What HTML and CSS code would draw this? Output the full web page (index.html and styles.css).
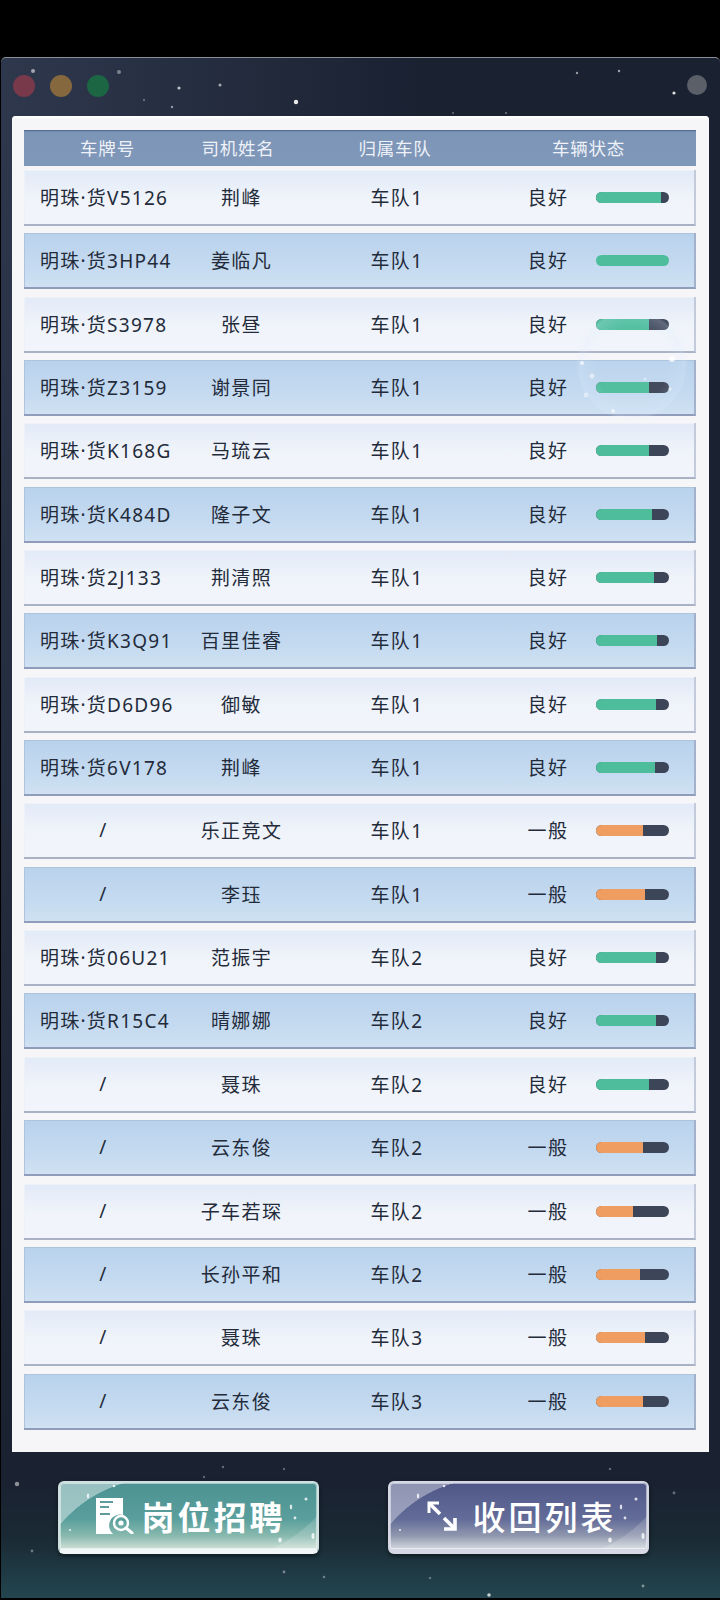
FILE: index.html
```html
<!DOCTYPE html>
<html lang="zh">
<head>
<meta charset="utf-8">
<title>车辆列表</title>
<link rel="stylesheet" href="styles.css">
</head>
<body>
<div class="window">
  <svg class="stars" width="719" height="1541" viewBox="0 0 719 1541">
    <g fill="#fff">
      <circle cx="32" cy="13" r="2" opacity=".55"/><circle cx="118" cy="14" r="2" opacity=".4"/><circle cx="178" cy="30" r="1.6" opacity=".7"/><circle cx="219" cy="27" r="1.5" opacity=".6"/><circle cx="295" cy="44" r="2.2" opacity=".9"/><circle cx="171" cy="49" r="1.2" opacity=".5"/><circle cx="143" cy="42" r="1" opacity=".4"/><circle cx="576" cy="15" r="1.2" opacity=".55"/><circle cx="618" cy="13" r="1.2" opacity=".6"/><circle cx="673" cy="35" r="1.6" opacity=".85"/><circle cx="452" cy="55" r="1" opacity=".35"/><circle cx="505" cy="55" r="1" opacity=".4"/>
      <circle cx="16" cy="1426" r="2.2" opacity=".5"/><circle cx="31" cy="1493" r="1.4" opacity=".35"/><circle cx="222" cy="1409" r="1.2" opacity=".35"/><circle cx="203" cy="1419" r="1.2" opacity=".3"/><circle cx="283" cy="1411" r="1.2" opacity=".3"/><circle cx="283" cy="1514" r="1.4" opacity=".4"/><circle cx="323" cy="1519" r="1.3" opacity=".35"/><circle cx="427" cy="1439" r="1.5" opacity=".4"/><circle cx="429" cy="1520" r="1.3" opacity=".3"/><circle cx="488" cy="1537" r="1.8" opacity=".75"/><circle cx="609" cy="1411" r="1.3" opacity=".3"/><circle cx="642" cy="1528" r="1.4" opacity=".45"/><circle cx="673" cy="1435" r="1.4" opacity=".35"/>
    </g>
  </svg>

  <header class="titlebar">
    <div class="lights">
      <span class="light light-red"></span>
      <span class="light light-amber"></span>
      <span class="light light-green"></span>
    </div>
    <span class="light light-grey"></span>
  </header>

  <main class="panel">
    <div class="thead">
      <span>车牌号</span><span>司机姓名</span><span>归属车队</span><span>车辆状态</span>
    </div>
    <div class="rows">
      <div class="row"><span class="plate">明珠·货V5126</span><span class="name">荆峰</span><span class="team">车队1</span><span class="status">良好</span><span class="bar"><i class="fill good" style="width:89%"></i></span></div>
      <div class="row alt"><span class="plate">明珠·货3HP44</span><span class="name">姜临凡</span><span class="team">车队1</span><span class="status">良好</span><span class="bar"><i class="fill good" style="width:100%"></i></span></div>
      <div class="row"><span class="plate">明珠·货S3978</span><span class="name">张昼</span><span class="team">车队1</span><span class="status">良好</span><span class="bar"><i class="fill good" style="width:73%"></i></span></div>
      <div class="row alt"><span class="plate">明珠·货Z3159</span><span class="name">谢景同</span><span class="team">车队1</span><span class="status">良好</span><span class="bar"><i class="fill good" style="width:72%"></i></span></div>
      <div class="row"><span class="plate">明珠·货K168G</span><span class="name">马琉云</span><span class="team">车队1</span><span class="status">良好</span><span class="bar"><i class="fill good" style="width:72%"></i></span></div>
      <div class="row alt"><span class="plate">明珠·货K484D</span><span class="name">隆子文</span><span class="team">车队1</span><span class="status">良好</span><span class="bar"><i class="fill good" style="width:77%"></i></span></div>
      <div class="row"><span class="plate">明珠·货2J133</span><span class="name">荆清照</span><span class="team">车队1</span><span class="status">良好</span><span class="bar"><i class="fill good" style="width:80%"></i></span></div>
      <div class="row alt"><span class="plate">明珠·货K3Q91</span><span class="name">百里佳睿</span><span class="team">车队1</span><span class="status">良好</span><span class="bar"><i class="fill good" style="width:83%"></i></span></div>
      <div class="row"><span class="plate">明珠·货D6D96</span><span class="name">御敏</span><span class="team">车队1</span><span class="status">良好</span><span class="bar"><i class="fill good" style="width:82%"></i></span></div>
      <div class="row alt"><span class="plate">明珠·货6V178</span><span class="name">荆峰</span><span class="team">车队1</span><span class="status">良好</span><span class="bar"><i class="fill good" style="width:81%"></i></span></div>
      <div class="row"><span class="plate slash">/</span><span class="name">乐正竞文</span><span class="team">车队1</span><span class="status">一般</span><span class="bar"><i class="fill fair" style="width:64%"></i></span></div>
      <div class="row alt"><span class="plate slash">/</span><span class="name">李珏</span><span class="team">车队1</span><span class="status">一般</span><span class="bar"><i class="fill fair" style="width:67%"></i></span></div>
      <div class="row"><span class="plate">明珠·货06U21</span><span class="name">范振宇</span><span class="team">车队2</span><span class="status">良好</span><span class="bar"><i class="fill good" style="width:82%"></i></span></div>
      <div class="row alt"><span class="plate">明珠·货R15C4</span><span class="name">晴娜娜</span><span class="team">车队2</span><span class="status">良好</span><span class="bar"><i class="fill good" style="width:82%"></i></span></div>
      <div class="row"><span class="plate slash">/</span><span class="name">聂珠</span><span class="team">车队2</span><span class="status">良好</span><span class="bar"><i class="fill good" style="width:73%"></i></span></div>
      <div class="row alt"><span class="plate slash">/</span><span class="name">云东俊</span><span class="team">车队2</span><span class="status">一般</span><span class="bar"><i class="fill fair" style="width:64%"></i></span></div>
      <div class="row"><span class="plate slash">/</span><span class="name">子车若琛</span><span class="team">车队2</span><span class="status">一般</span><span class="bar"><i class="fill fair" style="width:51%"></i></span></div>
      <div class="row alt"><span class="plate slash">/</span><span class="name">长孙平和</span><span class="team">车队2</span><span class="status">一般</span><span class="bar"><i class="fill fair" style="width:60%"></i></span></div>
      <div class="row"><span class="plate slash">/</span><span class="name">聂珠</span><span class="team">车队3</span><span class="status">一般</span><span class="bar"><i class="fill fair" style="width:67%"></i></span></div>
      <div class="row alt"><span class="plate slash">/</span><span class="name">云东俊</span><span class="team">车队3</span><span class="status">一般</span><span class="bar"><i class="fill fair" style="width:65%"></i></span></div>
    </div>
    <div class="bubble">
      <svg class="bubble-dots" width="104" height="104" viewBox="0 0 104 104">
        <g fill="#fff">
          <circle cx="2" cy="50" r="2" opacity=".7"/><circle cx="12" cy="63" r="2.4" opacity=".5"/><circle cx="6" cy="82" r="2.400" opacity=".45"/><circle cx="92" cy="46" r="3" opacity=".75"/><circle cx="65" cy="66" r="1.3" opacity=".5"/><circle cx="90" cy="76" r="1.600" opacity=".55"/><circle cx="33" cy="98" r="2" opacity=".6"/>
        </g>
      </svg>
    </div>
  </main>

  <footer class="footer">
    <button class="btn btn-teal" type="button">
      <svg class="btn-sparkles" width="257" height="65" viewBox="0 0 257 65">
        <g fill="#fff" opacity=".8">
          <ellipse cx="28" cy="13" rx="1.200" ry="2.400"/><circle cx="54" cy="3" r="1.300"/><ellipse cx="231" cy="24" rx="1.200" ry="2.400"/><circle cx="246" cy="16" r="1.500"/><circle cx="235" cy="35" r="1.400"/><ellipse cx="220" cy="57" rx="1.800" ry="2.600"/><ellipse cx="253" cy="53" rx="1.500" ry="3"/><circle cx="10" cy="47" r="1.100"/>
        </g>
      </svg>
      <svg class="btn-icon" width="38" height="36" viewBox="0 0 38 36">
        <path fill="#fff" d="M0 0h27v17a11 11 0 0 0-10 19H0z"/>
        <g stroke="#5f9c9e" stroke-width="2" fill="none"><path d="M4 4h13M4 9h9M4 16h10"/></g>
        <circle cx="25" cy="25" r="7" fill="none" stroke="#fff" stroke-width="2.400"/>
        <circle cx="25" cy="25" r="2.600" fill="#fff"/>
        <path d="M30 30l6 5" stroke="#fff" stroke-width="3" stroke-linecap="round"/>
      </svg>
      <span class="btn-label">岗位招聘</span>
    </button>
    <button class="btn btn-violet" type="button">
      <svg class="btn-sparkles" width="257" height="65" viewBox="0 0 257 65">
        <g fill="#fff" opacity=".8">
          <ellipse cx="28" cy="13" rx="1.200" ry="2.400"/><circle cx="54" cy="3" r="1.300"/><ellipse cx="231" cy="24" rx="1.200" ry="2.400"/><circle cx="246" cy="16" r="1.500"/><circle cx="235" cy="35" r="1.400"/><ellipse cx="220" cy="57" rx="1.800" ry="2.600"/><ellipse cx="253" cy="53" rx="1.500" ry="3"/><circle cx="10" cy="47" r="1.100"/>
        </g>
      </svg>
      <svg class="btn-icon" width="30" height="30" viewBox="0 0 30 30">
        <g fill="none" stroke="#fff" stroke-width="3.600">
          <path d="M2 12V2h10" stroke-width="3"/>
          <path d="M3 3l10 10"/>
          <path d="M17 17l10 10"/>
          <path d="M28 17v11H17"/>
        </g>
      </svg>
      <span class="btn-label">收回列表</span>
    </button>
  </footer>
</div>
</body>
</html>
```

FILE: styles.css
```css
* { box-sizing: border-box; }
html, body { margin: 0; padding: 0; background: #000; }
body {
  width: 720px;
  height: 1600px;
  padding: 57px 0 2px 1px;
  font-family: "Noto Sans", "Noto Sans CJK SC", sans-serif;
  overflow: hidden;
}
.window {
  position: relative;
  display: flex;
  flex-direction: column;
  height: 1541px;
  border-top: 1px solid #8b9098;
  border-radius: 5px 5px 0 0;
  background:
    radial-gradient(ellipse 420px 1400px at 0 0, rgba(50,60,82,.85), rgba(27,33,48,0)),
    linear-gradient(180deg, #1a2131 0, #1a2131 1420px, #1a2a34 1480px, #234650 1541px);
  overflow: hidden;
}
.stars { position: absolute; left: 0; top: 0; pointer-events: none; }

.titlebar {
  position: relative;
  display: flex;
  align-items: center;
  justify-content: space-between;
  height: 58px;
  padding: 0 25px 0 12px;
}
.lights { display: flex; gap: 15px; margin-top: -3px; }
.light { display: block; width: 22px; height: 22px; border-radius: 50%; }
.light-red { background: #78394a; }
.light-amber { background: #86683f; }
.light-green { background: #1d6644; }
.light-grey { background: #5a5f68; width: 20px; height: 20px; margin: -4px -12px 0 0; }

.panel {
  position: relative;
  width: 697px;
  height: 1336px;
  margin-left: 11px;
  padding: 14px 13px 0 12px;
  background: #f6f6f9;
  border-radius: 4px 4px 0 0;
  box-shadow: inset 0 2px 2px #fff;
}
.thead {
  display: grid;
  grid-template-columns: 167px 94px 220px 167px;
  align-items: center;
  height: 36px;
  padding-bottom: 2px;
  background: linear-gradient(180deg, #6f8bb0 0, #7d95b7 6%, #7f97b8 100%);
  border-top: 1px solid #5a6f8f;
  color: #eef2f8;
  font-size: 17.5px;
  letter-spacing: .8px;
  text-align: center;
  white-space: nowrap;
}
.rows {
  display: flex;
  flex-direction: column;
  gap: 7.35px;
  margin-top: 4px;
}
.row {
  display: grid;
  grid-template-columns: 167px 101px 210px 92px 74px;
  align-items: center;
  height: 56px;
  background: linear-gradient(180deg, #e2eaf8 0%, #f0f4fa 55%, #f2f4fb 100%);
  border-right: 2px solid #c3cada;
  border-bottom: 2px solid #a9b1c4;
  box-shadow: inset 1px 1px 0 #eef1f8;
  color: #232b3a;
  font-size: 19px;
  letter-spacing: 1.4px;
  text-align: center;
}
.row.alt {
  background: linear-gradient(180deg, #b9d2ec 0%, #c4daf0 60%, #cfe1f2 100%);
  border-right-color: #a3b1cb;
  border-bottom-color: #8f9cba;
  box-shadow: inset 1px 1px 0 #aec4dd;
}
.plate { text-align: left; padding-left: 16px; letter-spacing: 1.25px; white-space: nowrap; }
.plate.slash { text-align: center; padding: 0 8px 0 0; }
.bar {
  display: block;
  width: 73px;
  height: 11px;
  margin: 1px 0 0 2px;
  border-radius: 6px;
  background: #3d4558;
  overflow: hidden;
}
.fill { display: block; height: 100%; }
.fill.good { background: #4dbd9c; }
.fill.fair { background: #ef9d61; }

.bubble {
  position: absolute;
  left: 568px;
  top: 197px;
  width: 104px;
  height: 104px;
  border-radius: 50%;
  background: radial-gradient(circle at 50% 50%, rgba(255,255,255,.03) 50%, rgba(215,235,255,.4) 92%, rgba(235,245,255,.5) 100%);
  box-shadow: 0 0 5px rgba(225,240,255,.55);
  pointer-events: none;
}
.bubble-dots { display: block; }

.footer {
  position: relative;
  display: flex;
  justify-content: space-between;
  padding: 29px 71px 0 57px;
}
.btn {
  position: relative;
  display: flex;
  align-items: center;
  justify-content: center;
  width: 261px;
  height: 73px;
  padding: 2px 0 3px 4px;
  border: 2px solid #cfe0e0;
  border-bottom: 5px solid #f2f6f6;
  border-radius: 6px;
  color: #fff;
  font-family: "Noto Sans", "Noto Sans CJK SC", sans-serif;
  font-size: 33px;
  font-weight: 700;
  letter-spacing: 3px;
  box-shadow: 0 2px 4px rgba(0,0,0,.5), inset 0 0 0 1px rgba(255,255,255,.5);
}
.btn-teal {
  background:
    radial-gradient(circle at 101px 127px, rgba(255,255,255,0) 132px, rgba(255,255,255,.42) 132.500px) 0 0 / 70px 46px no-repeat,
    radial-gradient(circle at -27px -74px, rgba(255,255,255,0) 130px, rgba(255,255,255,.16) 130.500px) right bottom / 70px 46px no-repeat,
    linear-gradient(180deg, #4c9292 0%, #5a9f9d 55%, #88b9ae 80%, #cfe0d8 100%);
}
.btn-violet {
  padding-left: 6px;
  border-color: #d6d8e6;
  font-weight: 500;
  background:
    radial-gradient(circle at 101px 127px, rgba(255,255,255,0) 132px, rgba(255,255,255,.36) 132.500px) 0 0 / 70px 46px no-repeat,
    radial-gradient(circle at -27px -74px, rgba(255,255,255,0) 130px, rgba(255,255,255,.16) 130.500px) right bottom / 70px 46px no-repeat,
    linear-gradient(180deg, #4f5788 0%, #636c98 55%, #8f97ae 80%, #d3d9de 100%);
}
.btn-sparkles { position: absolute; left: 0; top: 0; pointer-events: none; }
.btn-icon { position: relative; flex: none; margin-right: 8px; }
.btn-violet .btn-icon { margin-right: 16px; }
.btn-label { position: relative; }
```
